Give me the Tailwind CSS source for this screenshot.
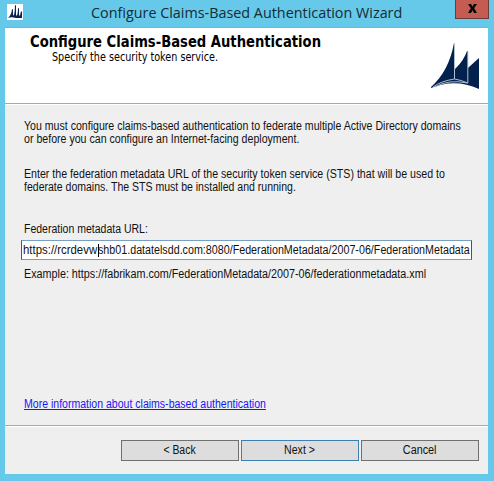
<!DOCTYPE html>
<html lang="en">
<head>
<meta charset="utf-8">
<title>Configure Claims-Based Authentication Wizard</title>
<script src="https://cdn.jsdelivr.net/npm/@tailwindcss/browser@4"></script>
</head>
<body class="h-[481px] w-[494px] overflow-hidden bg-[#66c9e9] font-['Liberation_Sans',Arial,sans-serif] text-[12px] leading-[13px] text-[#111] whitespace-nowrap">
<div class="flex h-[481px] w-[494px] flex-col overflow-hidden">
  <header class="flex h-[27px] w-[490px] shrink-0 items-start pl-[7px]">
    <svg class="mt-1 h-4 w-4 shrink-0 bg-white" viewBox="0 0 16 16"><path d="M1 14Q4.500 11 5 5.500L6 5V11.500L7 11Q8 7 8 1L9 1.500V11.500H10Q11 9 11 4.500L12 4V11.500H13Q13.500 9.500 14 7L15 8V14H9Q4 12.500 1 14Z" fill="#0a2350"/></svg>
    <h1 class="ml-[68px] mt-[2px] w-[313px] font-['Open_Sans',sans-serif] text-[15px] leading-[21px] text-[#152b35]"><span class="inline-block origin-left scale-x-[.957]">Configure Claims-Based Authentication Wizard</span></h1>
    <button class="ml-auto mr-px flex h-[19px] w-[34px] items-center justify-center border border-t-0 border-[#683c40] bg-[#c45c52]" aria-label="Close">
      <svg class="-mt-[2px] h-[9px] w-[9px]" viewBox="0 0 9 9"><path d="M0 0H3L4.500 2.500 6 0H9L6.200 4.300 9 9H6L4.500 6.200 3 9H0L2.800 4.300Z" fill="#080808"/></svg>
    </button>
  </header>
  <main class="ml-[5px] flex h-[447px] w-[483px] shrink-0 flex-col border-t border-[#79b4ca] bg-[#efefef]">
    <section class="flex h-[75px] shrink-0 justify-between bg-white pl-[25px]">
      <div class="pt-[6px] text-black">
        <h2 class="h-[16px] font-['DejaVu_Sans_Condensed','DejaVu_Sans',sans-serif] text-[15px] leading-[16px] font-bold"><span class="inline-block origin-left scale-x-[.975]">Configure Claims-Based Authentication</span></h2>
        <p class="ml-[22px] font-['DejaVu_Sans_Condensed','DejaVu_Sans',sans-serif] text-[12px] leading-[14px]"><span class="inline-block origin-left scale-x-[.892]">Specify the security token service.</span></p>
      </div>
      <svg class="mr-[9px] mt-[14px] h-[48px] w-[48px]" viewBox="0 0 48 48">
        <path d="M0 45Q18 29 23 1L24 1V27L25 26Q33 18 36 9H37V26L38 25L48 16V47Q24 36 0 46Z" fill="#03214d"/>
        <path d="M23.500 1V37Q10 39 2 45M36.800 9V41Q17 37 4 45M23.500 37Q30 38 36.800 41" fill="none" stroke="#aebbd0" stroke-width="1"/>
      </svg>
    </section>
    <div class="h-[2px] shrink-0 border-t border-[#aaa] bg-white"></div>
    <section class="h-[320px] shrink-0 px-[19px] pt-[15px]">
      <p class="w-[440px]"><span class="inline-block origin-left scale-x-[.882]">You must configure claims-based authentication to federate multiple Active Directory domains</span><br><span class="inline-block origin-left scale-x-[.884]">or before you can configure an Internet-facing deployment.</span></p>
      <p class="mt-[22px]"><span class="inline-block origin-left scale-x-[.886]">Enter the federation metadata URL of the security token service (STS) that will be used to</span><br><span class="inline-block origin-left scale-x-[.877]">federate domains. The STS must be installed and running.</span></p>
      <label class="mt-[29px] block"><span class="inline-block origin-left scale-x-[.876]">Federation metadata URL:</span></label>
      <div class="-ml-[3px] mt-[4px] flex h-[20px] w-[451px] items-center border border-[#789fbf] border-r-[#35577c] border-l-[#35577c] bg-white px-[1px]">
        <div class="relative flex h-[13px] w-[447px] overflow-hidden"><span class="w-[75px] shrink-0 origin-left scale-x-[.95]">https://rcrdevw</span><span class="w-[372px] shrink-0 origin-left scale-x-[.893]">shb01.datatelsdd.com:8080/FederationMetadata/2007-06/FederationMetadata</span><i class="absolute left-[75px] top-0 h-[13px] w-px bg-black"></i></div>
      </div>
      <p class="mt-[8px]"><span class="inline-block origin-left scale-x-[.897]">Example: https://fabrikam.com/FederationMetadata/2007-06/federationmetadata.xml</span></p>
      <a class="mt-[117px] block text-[#1717f5]"><span class="inline-block origin-left scale-x-[.878] underline">More information about claims-based authentication</span></a>
    </section>
    <div class="h-[2px] shrink-0 border-t border-[#aaa] bg-white"></div>
    <footer class="flex gap-[2px] pl-[116px] pt-[13px]">
      <button class="h-[21px] w-[118px] border border-[#707070] bg-[#ddd]"><span class="inline-block scale-x-[.87]">&lt; Back</span></button>
      <button class="h-[21px] w-[118px] border border-[#3c7fb1] bg-[#ddd]"><span class="inline-block scale-x-[.88]">Next &gt;</span></button>
      <button class="h-[21px] w-[118px] border border-[#707070] bg-[#ddd]"><span class="inline-block scale-x-[.9]">Cancel</span></button>
    </footer>
  </main>
</div>
</body>
</html>
